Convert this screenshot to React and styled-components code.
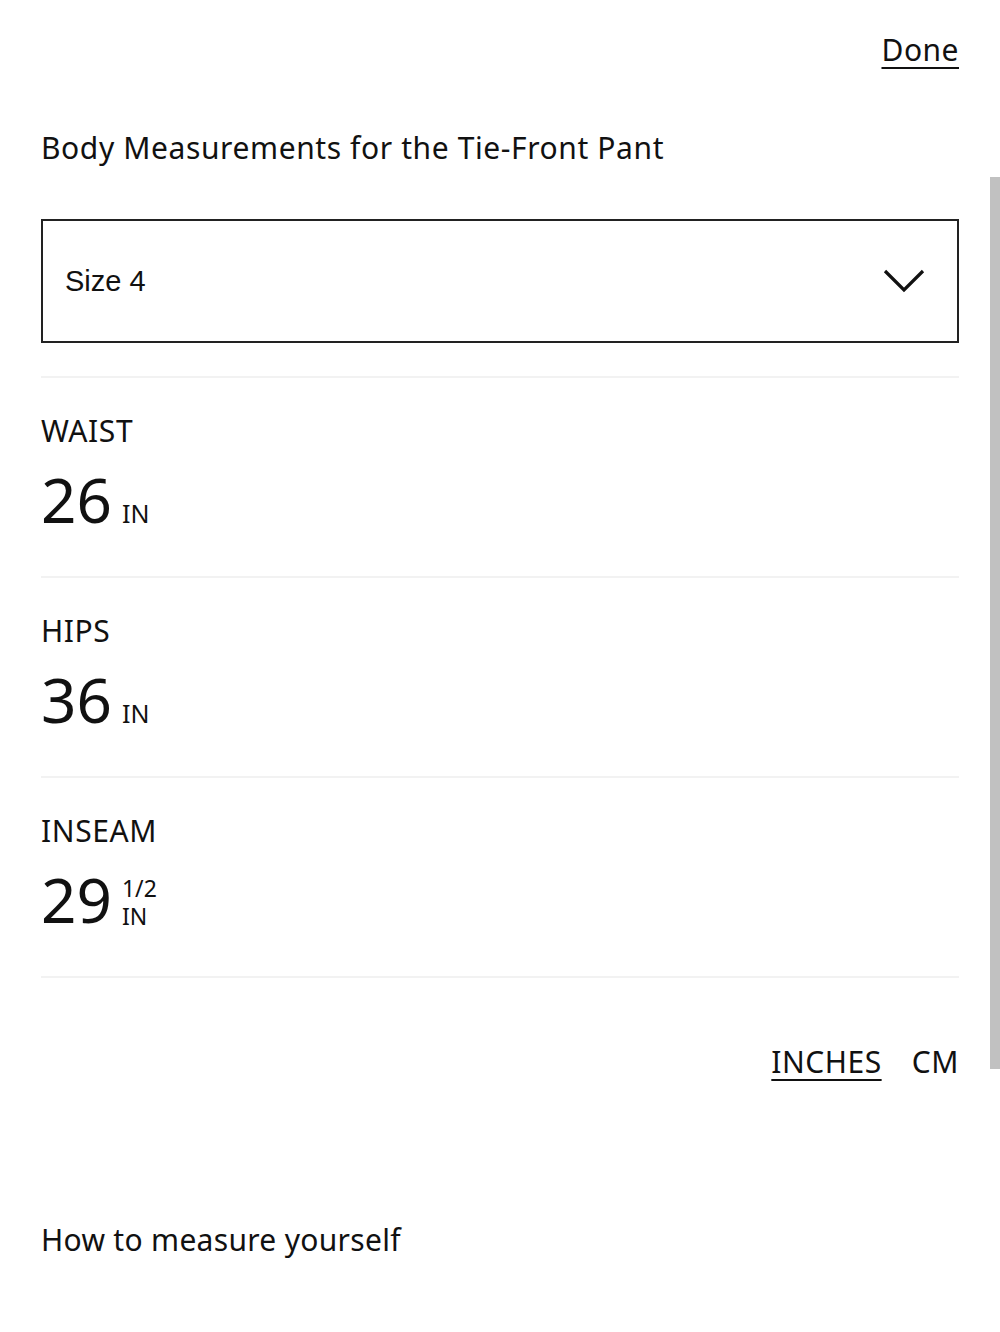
import styled, { createGlobalStyle } from "styled-components";

const GlobalStyle = createGlobalStyle`
  body {
    margin: 0;
    background: #fff;
    color: #111;
    font-family: "Noto Sans", Lato, sans-serif;
  }
`

const sizes = [
  { label: "WAIST", value: "26" },
  { label: "HIPS", value: "36" },
  { label: "INSEAM", value: "29", fraction: "1/2" },
]

const Page = styled.main`
  width: 1000px;
  min-height: 1332px;
  box-sizing: border-box;
  padding: 30px 41px 0 41px;
  display: flex;
  flex-direction: column;
`

const TopBar = styled.div`
  display: flex;
  justify-content: flex-end;
`

const TextLink = styled.a`
  font-size: 30px;
  line-height: 40px;
  letter-spacing: 0.5px;
  color: #111;
  text-decoration: underline;
  text-underline-offset: 6px;
  text-decoration-thickness: 2px;
  cursor: pointer;
`

const Title = styled.h1`
  margin: 58px 0 0 0;
  font-size: 30px;
  line-height: 40px;
  font-weight: 400;
  letter-spacing: 0.6px;
`

const Select = styled.div`
  margin-top: 51px;
  height: 124px;
  box-sizing: border-box;
  border: 2px solid #222;
  display: flex;
  align-items: center;
  justify-content: space-between;
  padding: 0 32px 0 22px;
  font-family: "Liberation Sans", Arial, sans-serif;
  font-size: 29px;
`

const List = styled.div`
  margin-top: 33px;
  border-top: 2px solid #f2f2f2;
`

const Row = styled.div`
  height: 198px;
  border-bottom: 2px solid #f2f2f2;
`

const Label = styled.div`
  padding-top: 33px;
  font-size: 30px;
  line-height: 40px;
  letter-spacing: 0.6px;
`

const Value = styled.div`
  margin-top: 17px;
  display: flex;
  align-items: flex-end;
  gap: 10px;
`

const Number = styled.span`
  font-size: 62px;
  line-height: 1;
`

const Unit = styled.span`
  font-size: 25px;
  line-height: 1;
  padding-bottom: 4px;
`

const Stack = styled.span`
  display: flex;
  flex-direction: column;
  align-items: flex-start;
  font-size: 23px;
  line-height: 28px;
  padding-bottom: 0;
`

const Units = styled.div`
  margin-top: 64px;
  display: flex;
  justify-content: flex-end;
  gap: 30px;
  font-size: 30px;
  line-height: 40px;
  letter-spacing: 0.6px;
`

const Unselected = styled.span`
  color: #111;
`

const Footer = styled.p`
  margin: 138px 0 0 0;
  font-size: 30px;
  line-height: 40px;
  letter-spacing: 0.3px;
`

const Scroll = styled.div`
  position: fixed;
  top: 177px;
  right: 0;
  width: 10px;
  height: 892px;
  background: #c1c1c1;
`

function Chevron() {
  return (
    <svg width="42" height="26" viewBox="0 0 42 26" fill="none">
      <path d="M2 3 L21 22 L40 3" stroke="#111" strokeWidth="3.2" />
    </svg>
  )
}

function App() {
  return (
    <>
      <GlobalStyle />
      <Page>
        <TopBar>
          <TextLink>Done</TextLink>
        </TopBar>
        <Title>Body Measurements for the Tie-Front Pant</Title>
        <Select>
          <span>Size 4</span>
          <Chevron />
        </Select>
        <List>
          {sizes.map((s) => (
            <Row key={s.label}>
              <Label>{s.label}</Label>
              <Value>
                <Number>{s.value}</Number>
                {s.fraction ? (
                  <Stack>
                    <span>{s.fraction}</span>
                    <span>IN</span>
                  </Stack>
                ) : (
                  <Unit>IN</Unit>
                )}
              </Value>
            </Row>
          ))}
        </List>
        <Units>
          <TextLink>INCHES</TextLink>
          <Unselected>CM</Unselected>
        </Units>
        <Footer>How to measure yourself</Footer>
      </Page>
      <Scroll />
    </>
  );
}

export default App;
